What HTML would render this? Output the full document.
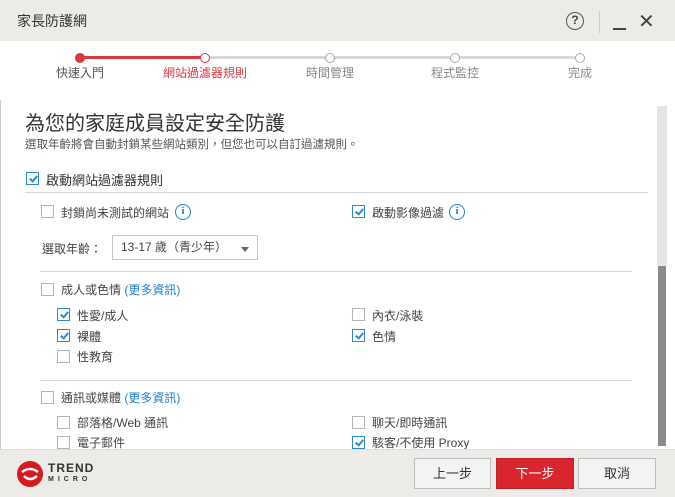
<!DOCTYPE html>
<html><head><meta charset="utf-8"><style>
*{margin:0;padding:0;box-sizing:border-box}
body{width:675px;height:497px;overflow:hidden;background:#fff;font-family:"Liberation Sans","Noto Sans CJK TC",sans-serif;color:#333;position:relative}
.a{position:absolute;white-space:nowrap}
.cb{position:absolute;width:13px;height:13px;border:1px solid #b5b5b5;background:#fff}
.cb.on{border-color:#2b8ad6}
.cb.on::after{content:"";position:absolute;left:3.5px;top:1px;width:3px;height:6px;border:solid #2b8ad6;border-width:0 2px 2px 0;transform:rotate(40deg)}
.t{font-size:12px;color:#444}
.info{position:absolute;width:16px;height:16px;border:1.5px solid #1f7ed0;border-radius:50%;color:#1f7ed0;font:bold 11px "Liberation Serif",serif;text-align:center;line-height:13px}
.hl{position:absolute;height:1px;background:#d8d8d8}
.btn{position:absolute;top:458px;height:31px;border:1px solid #bdbdbd;background:#f3f3f3;font-size:13px;text-align:center;line-height:29px;color:#333}
.dot{position:absolute;top:53px;width:10px;height:10px;border:1.5px solid #aaa;border-radius:50%;background:#fff}
.lbl{position:absolute;top:64px;font-size:12px;color:#888;width:100px;text-align:center}
</style></head><body>
<div class="a" style="left:0;top:0;width:675px;height:41px;background:#ecebe7"></div>
<div class="a" style="left:17px;top:11px;font-size:14px;color:#333">家長防護網</div>
<div class="a" style="left:566px;top:12px;width:18px;height:18px;border:1.5px solid #555;border-radius:50%;font-size:12px;font-weight:bold;text-align:center;line-height:15px;color:#444">?</div>
<div class="a" style="left:599px;top:11px;width:1px;height:22px;background:#ccc"></div>
<div class="a" style="left:613px;top:28px;width:13px;height:2px;background:#444"></div>
<div class="a" style="left:638px;top:9px;font-size:20px;color:#444">✕</div>

<div class="a" style="left:84px;top:56px;width:117px;height:3px;background:#d73a3f"></div>
<div class="a" style="left:209px;top:56px;width:370px;height:3px;background:#d8d8d8"></div>
<div class="dot" style="left:75px;background:#d73a3f;border-color:#d73a3f"></div>
<div class="dot" style="left:200px;border-color:#d73a3f"></div>
<div class="dot" style="left:325px"></div>
<div class="dot" style="left:450px"></div>
<div class="dot" style="left:575px"></div>
<div class="lbl" style="left:30px;color:#555">快速入門</div>
<div class="lbl" style="left:155px;color:#d73a3f">網站過濾器規則</div>
<div class="lbl" style="left:280px">時間管理</div>
<div class="lbl" style="left:405px">程式監控</div>
<div class="lbl" style="left:530px">完成</div>

<div class="a" style="left:657px;top:106px;width:10px;height:160px;background:#e5e5e5"></div>
<div class="a" style="left:658px;top:266px;width:8px;height:180px;background:#8a8a8a"></div>
<div class="a" style="left:0;top:100px;width:1px;height:350px;background:#ccc"></div>

<div class="a" style="left:25px;top:107px;font-size:20px;color:#333">為您的家庭成員設定安全防護</div>
<div class="a" style="left:25px;top:136px;font-size:11.5px;color:#555">選取年齡將會自動封鎖某些網站類別，但您也可以自訂過濾規則。</div>
<div class="cb on" style="left:26px;top:172px"></div>
<div class="a t" style="left:46px;top:170px;font-size:13px;color:#333">啟動網站過濾器規則</div>
<div class="hl" style="left:25px;top:192px;width:623px"></div>

<div class="cb" style="left:41px;top:205px"></div>
<div class="a t" style="left:61px;top:204px">封鎖尚未測試的網站</div>
<div class="info" style="left:175px;top:204px">i</div>
<div class="cb on" style="left:352px;top:205px"></div>
<div class="a t" style="left:372px;top:204px">啟動影像過濾</div>
<div class="info" style="left:449px;top:204px">i</div>
<div class="a t" style="left:42px;top:240px">選取年齡：</div>
<div class="a" style="left:112px;top:235px;width:146px;height:25px;border:1px solid #c8c8c8;font-size:12px;line-height:23px;padding-left:8px;color:#444">13-17 歲（青少年）</div>
<div class="a" style="left:241px;top:247px;border:4px solid transparent;border-top:5px solid #666"></div>
<div class="hl" style="left:40px;top:271px;width:592px"></div>

<div class="cb" style="left:41px;top:283px"></div>
<div class="a t" style="left:61px;top:281px">成人或色情 <span style="color:#1f7ed0">(更多資訊)</span></div>
<div class="cb on" style="left:57px;top:308px"></div><div class="a t" style="left:77px;top:307px">性愛/成人</div>
<div class="cb" style="left:352px;top:308px"></div><div class="a t" style="left:372px;top:307px">內衣/泳裝</div>
<div class="cb on" style="left:57px;top:329px"></div><div class="a t" style="left:77px;top:328px">裸體</div>
<div class="cb on" style="left:352px;top:329px"></div><div class="a t" style="left:372px;top:328px">色情</div>
<div class="cb" style="left:57px;top:350px"></div><div class="a t" style="left:77px;top:348px">性教育</div>
<div class="hl" style="left:40px;top:380px;width:592px"></div>

<div class="cb" style="left:41px;top:391px"></div>
<div class="a t" style="left:61px;top:389px">通訊或媒體 <span style="color:#1f7ed0">(更多資訊)</span></div>
<div class="cb" style="left:57px;top:416px"></div><div class="a t" style="left:77px;top:414px">部落格/Web 通訊</div>
<div class="cb" style="left:352px;top:416px"></div><div class="a t" style="left:372px;top:414px">聊天/即時通訊</div>
<div class="cb" style="left:57px;top:436px"></div><div class="a t" style="left:77px;top:434px">電子郵件</div>
<div class="cb on" style="left:352px;top:436px"></div><div class="a t" style="left:372px;top:434px">駭客/不使用 Proxy</div>

<div class="a" style="left:0;top:449px;width:675px;height:48px;background:#ecebe7;border-top:1px solid #ddd"></div>
<svg class="a" style="left:16px;top:460px" width="28" height="28" viewBox="0 0 28 28"><circle cx="14" cy="14" r="13" fill="#d71920"/><path d="M6 12 Q14 6 22 12 M8 16 Q14 22 21 16" stroke="#fff" stroke-width="2.5" fill="none"/></svg>
<div class="a" style="left:48px;top:461px;font-size:12px;font-weight:bold;color:#333;letter-spacing:1px">TREND</div>
<div class="a" style="left:48px;top:476px;font-size:7px;font-weight:bold;color:#333;letter-spacing:4px">MICRO</div>
<div class="btn" style="left:414px;width:77px">上一步</div>
<div class="btn" style="left:496px;width:78px;background:#d8252e;border-color:#c41f27;color:#fff">下一步</div>
<div class="btn" style="left:578px;width:78px">取消</div>
</body></html>
